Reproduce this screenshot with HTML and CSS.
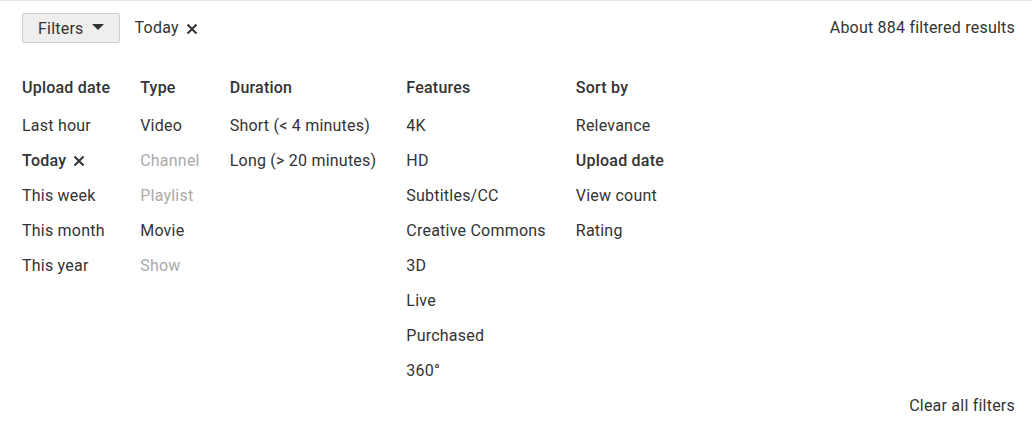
FILE: index.html
```html
<!DOCTYPE html>
<html>
<head>
<meta charset="utf-8">
<link rel="stylesheet" href="styles.css">
</head>
<body>
<div class="page">
  <div class="topbar">
    <div class="left">
      <button class="filters-btn">Filters <span class="caret"></span></button>
      <span class="chip">Today <svg class="x" viewBox="0 0 12 12" width="12" height="12"><path d="M1.5 1.5 L10.5 10.5 M10.5 1.5 L1.5 10.5" stroke="#333" stroke-width="2" fill="none"/></svg></span>
    </div>
    <div class="results">About 884 filtered results</div>
  </div>
  <div class="columns">
    <div class="col">
      <div class="head">Upload date</div>
      <div class="item">Last hour</div>
      <div class="item active">Today <svg class="x" viewBox="0 0 12 12" width="12" height="12"><path d="M1.5 1.5 L10.5 10.5 M10.5 1.5 L1.5 10.5" stroke="#333" stroke-width="2" fill="none"/></svg></div>
      <div class="item">This week</div>
      <div class="item">This month</div>
      <div class="item">This year</div>
    </div>
    <div class="col">
      <div class="head">Type</div>
      <div class="item">Video</div>
      <div class="item disabled">Channel</div>
      <div class="item disabled">Playlist</div>
      <div class="item">Movie</div>
      <div class="item disabled">Show</div>
    </div>
    <div class="col">
      <div class="head">Duration</div>
      <div class="item">Short (&lt; 4 minutes)</div>
      <div class="item">Long (&gt; 20 minutes)</div>
    </div>
    <div class="col">
      <div class="head">Features</div>
      <div class="item">4K</div>
      <div class="item">HD</div>
      <div class="item">Subtitles/CC</div>
      <div class="item">Creative Commons</div>
      <div class="item">3D</div>
      <div class="item">Live</div>
      <div class="item">Purchased</div>
      <div class="item">360°</div>
    </div>
    <div class="col">
      <div class="head">Sort by</div>
      <div class="item">Relevance</div>
      <div class="item active">Upload date</div>
      <div class="item">View count</div>
      <div class="item">Rating</div>
    </div>
  </div>
  <div class="footer"><span class="clear">Clear all filters</span></div>
</div>
</body>
</html>
```
FILE: styles.css
```css
html, body {
  margin: 0;
  padding: 0;
  background: #fff;
}
body {
  font-family: Roboto, "Liberation Sans", sans-serif;
  font-size: 16px;
  letter-spacing: 0.22px;
  color: #333;
}
.page {
  border-top: 1px solid #e8e8e8;
  padding: 12px 17px 0 22px;
}
.topbar {
  display: flex;
  align-items: center;
  justify-content: space-between;
}
.left {
  display: flex;
  align-items: center;
  gap: 15px;
}
.filters-btn {
  display: flex;
  align-items: center;
  gap: 8px;
  height: 30px;
  box-sizing: border-box;
  padding: 0 15px 0 15px;
  border: 1px solid #cfcfcf;
  border-radius: 2px;
  background: #eeeeee;
  font-family: inherit;
  font-size: 16px;
  letter-spacing: 0.22px;
  color: #333;
  cursor: pointer;
}
.caret {
  width: 0;
  height: 0;
  border-left: 6px solid transparent;
  border-right: 6px solid transparent;
  border-top: 6px solid #333;
  margin-bottom: 2px;
}
.chip {
  display: flex;
  align-items: center;
  gap: 7px;
  margin-top: -2px;
}
.chip .x {
  margin-top: 3px;
}
.results {
  margin-top: -2px;
}
.columns {
  display: flex;
  gap: 30px;
  margin-top: 27px;
}
.col {
  display: flex;
  flex-direction: column;
}
.head {
  font-weight: 500;
  line-height: 35px;
  margin-bottom: 3px;
}
.item {
  line-height: 35px;
  white-space: nowrap;
  display: flex;
  align-items: center;
  gap: 7px;
}
.item.active {
  font-weight: 500;
}
.item.disabled {
  color: #aaaaaa;
}
.footer {
  display: flex;
  justify-content: flex-end;
  line-height: 35px;
}
```
